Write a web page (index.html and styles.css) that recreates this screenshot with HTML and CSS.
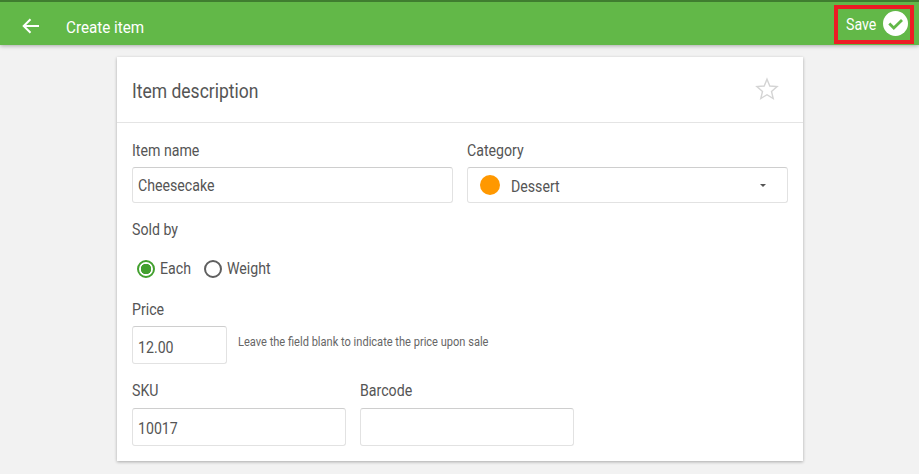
FILE: index.html
```html
<!DOCTYPE html>
<html lang="en">
<head>
<meta charset="utf-8">
<title>Create item</title>
<link rel="stylesheet" href="styles.css">
</head>
<body>
<header class="topbar">
  <svg class="back" width="18" height="16" viewBox="0 0 18 16"><path d="M17 8H2M8.5 1.2 1.7 8l6.8 6.8" fill="none" stroke="#fff" stroke-width="2"/></svg>
  <div class="title"><span class="sq">Create item</span></div>
  <div class="save">
    <span class="sq">Save</span>
    <svg class="save-icon" width="25" height="25" viewBox="0 0 25 25"><circle cx="12.5" cy="12.5" r="12.5" fill="#fff"/><path d="M6.3 12.6 10.8 17 19 9" fill="none" stroke="#62b848" stroke-width="2.8"/></svg>
  </div>
</header>
<main class="card">
  <div class="card-head">
    <h1><span class="sq">Item description</span></h1>
    <svg class="star" width="24" height="23" viewBox="0 0 24 23"><path d="M12 2.2 14.8 9l7.3.6-5.6 4.8 1.7 7.1L12 17.7l-6.2 3.8 1.7-7.1L1.9 9.6 9.2 9z" fill="none" stroke="#d4d4d4" stroke-width="1.4"/></svg>
  </div>
  <div class="card-body">
    <div class="row row-main">
      <div class="field grow">
        <label><span class="sq">Item name</span></label>
        <div class="input tall"><span class="sq">Cheesecake</span></div>
      </div>
      <div class="field grow">
        <label><span class="sq">Category</span></label>
        <div class="input tall select">
          <i class="dot"></i><span class="select-text"><span class="sq">Dessert</span></span><i class="caret"></i>
        </div>
      </div>
    </div>
    <div class="sold-label"><label><span class="sq">Sold by</span></label></div>
    <div class="radios">
      <span class="radio on"></span><span class="radio-text"><span class="sq">Each</span></span>
      <span class="radio"></span><span class="radio-text"><span class="sq">Weight</span></span>
    </div>
    <div class="field price-field">
      <label><span class="sq">Price</span></label>
      <div class="price-row">
        <div class="input price"><span class="sq">12.00</span></div>
        <span class="hint"><span class="sq">Leave the field blank to indicate the price upon sale</span></span>
      </div>
    </div>
    <div class="row row-codes">
      <div class="field code">
        <label><span class="sq">SKU</span></label>
        <div class="input high"><span class="sq">10017</span></div>
      </div>
      <div class="field code">
        <label><span class="sq">Barcode</span></label>
        <div class="input high"></div>
      </div>
    </div>
  </div>
</main>
</body>
</html>
```

FILE: styles.css
```css
* { box-sizing: border-box; }
html, body { height: 100%; }
body {
  margin: 0;
  height: 474px;
  overflow: hidden;
  background: #f2f2f2;
  font-family: Roboto, "Liberation Sans", sans-serif;
  color: #555;
}
/* the reference is horizontally squeezed: all text is narrow and tall */
.sq {
  display: inline-block;
  white-space: nowrap;
  transform: scaleX(.885);
  transform-origin: left center;
}
.topbar {
  height: 45px;
  background: #62b848;
  border-top: 2px solid #3f7d2f;
  box-shadow: 0 1px 4px rgba(0,0,0,.3);
  display: flex;
  align-items: center;
  padding: 0 5px 0 22px;
  color: #fff;
}
.back { margin-top: 5px; }
.title { margin: 7px 0 0 26px; font-size: 17.2px; flex: 1; }
.save {
  width: 80px;
  height: 39px;
  align-self: flex-start;
  margin-top: 3px;
  border: 4px solid #ed1c24;
  display: flex;
  align-items: center;
  gap: 3px;
  padding-left: 8px;
  font-size: 16px;
}
.save-icon { margin-top: -3px; }
.card {
  width: 686px;
  height: 404px;
  margin: 12px 0 0 117px;
  background: #fff;
  box-shadow: 0 1px 3px rgba(0,0,0,.3);
}
.card-head {
  height: 66px;
  border-bottom: 1px solid #e4e4e4;
  display: flex;
  align-items: center;
  justify-content: space-between;
  padding: 0 24px 0 15px;
}
h1 { margin: 3px 0 0; font-size: 19.8px; font-weight: 400; color: #555; }
.star { margin-top: -3px; }
.card-body { padding: 17px 15px 0; }
.row { display: flex; gap: 14px; }
.field { display: flex; flex-direction: column; }
.grow { flex: 1; }
label { font-size: 16px; height: 20px; line-height: 22px; color: #555; display: block; }
.input {
  margin-top: 7px;
  border: 1px solid #e2e2e2;
  border-top-color: #cecece;
  border-radius: 3px;
  padding: 0 5px;
  font-size: 16px;
  display: flex;
  align-items: center;
  color: #555;
}
.tall { height: 36px; }
.high { height: 38px; margin-top: 8px; padding-top: 2px; }
.select { padding-left: 12px; }
.dot { width: 20px; height: 20px; border-radius: 50%; background: #ff9800; }
.select-text { margin: 2px 0 0 11px; flex: 1; }
.caret {
  width: 0; height: 0;
  border: 3.5px solid transparent;
  border-top-color: #555;
  border-bottom: 0;
  margin-right: 16px;
}
.sold-label { margin-top: 16px; }
.radios { display: flex; align-items: center; margin-top: 20px; padding-left: 5px; font-size: 16px; }
.radio {
  width: 18px; height: 18px;
  border-radius: 50%;
  border: 2px solid #5f5f5f;
  display: block;
}
.radio.on { border-color: #43a02f; background: radial-gradient(circle, #43a02f 0 5px, #fff 5.5px); }
.radio-text { margin-left: 5px; width: 44px; }
.price-field { margin-top: 21px; }
.price-row { display: flex; align-items: flex-start; }
.price { width: 95px; height: 38px; padding-top: 5px; }
.hint { font-size: 12.5px; margin: 15px 0 0 11px; color: #666; }
.row-codes { margin-top: 16px; }
.code { width: 214px; }
```
